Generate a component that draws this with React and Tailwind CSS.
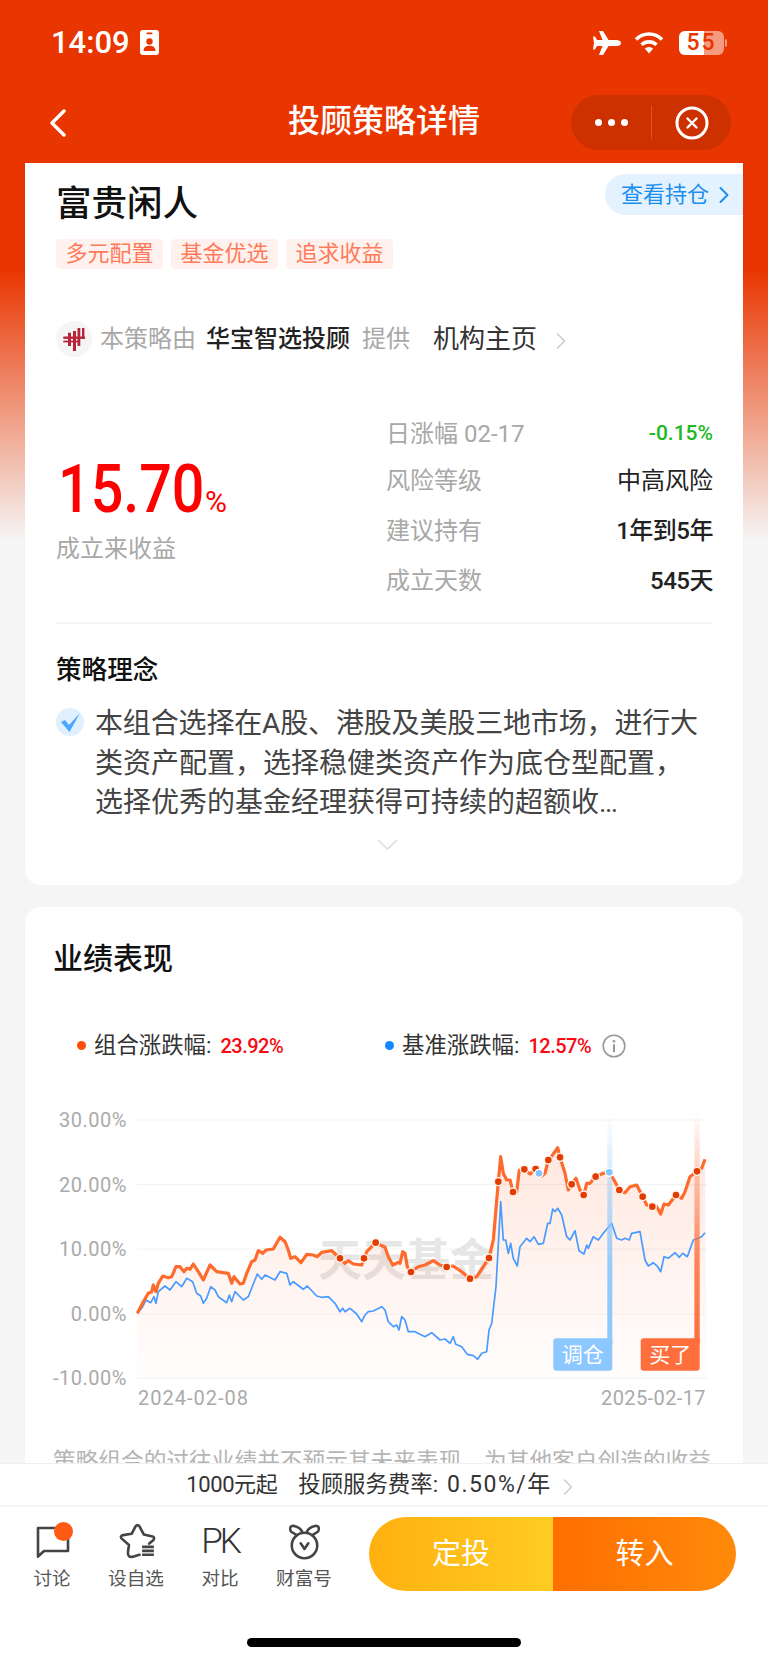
// 投顾策略详情 page
const scanA = (pts) => pts.map(([x, y]) => [20 + x / 3, 1010 + y / 3]);
const scanB = (pts) => pts.map(([x, y]) => [390 + x / 3, 1010 + y / 3]);
const toPath = (pts) => pts.map(([x, y], i) => `${i ? "L" : "M"}${x.toFixed(1)} ${y.toFixed(1)}`).join(" ");

const orangeLine = [
  ...scanA([[352,910],[370,875],[385,850],[395,845],[400,825],[408,845],[415,820],[428,798],[445,803],[455,800],[468,770],[480,770],[492,785],[500,775],[510,778],[520,762],[535,785],[550,810],[570,765],[590,785],[610,788],[625,790],[635,820],[642,800],[660,822],[670,820],[680,790],[695,755],[705,750],[715,722],[728,730],[738,720],[760,717],[780,682],[795,695],[805,720],[812,745],[825,740],[843,758],[860,733],[880,735],[892,740],[905,727],[935,722],[960,745],[975,760],[985,752],[1000,762],[1025,765],[1040,725],[1067,698],[1095,712],[1105,740]]),
  ...scanB([[8,765],[25,757],[30,760],[38,725],[45,730],[52,770],[63,785],[85,770],[105,765],[130,752],[150,765],[170,771],[190,768],[215,785],[240,806],[260,800],[280,770],[297,744],[310,690],[325,515],[332,440],[340,490],[350,510],[360,510],[369,545],[380,545],[388,480],[403,478],[420,492],[437,477],[455,498],[465,490],[475,450],[490,432],[503,413],[510,442],[525,490],[535,540],[545,523],[558,505],[570,540],[581,555],[590,520],[600,520],[617,500],[640,490],[658,487],[675,515],[688,540],[705,548],[720,530],[740,525],[758,560],[770,585],[787,590],[800,590],[812,612],[822,582],[835,585],[858,555],[875,565],[885,545],[900,500],[921,484],[935,475],[945,448]]),
];

const blueLine = [
  ...scanA([[352,910],[365,895],[378,870],[392,878],[402,860],[408,880],[415,845],[435,828],[450,840],[468,815],[485,830],[500,805],[518,815],[530,850],[542,858],[550,880],[560,865],[572,830],[585,840],[595,860],[620,878],[628,855],[635,875],[645,845],[670,870],[685,860],[700,822],[712,792],[725,808],[735,795],[765,810],[780,785],[800,790],[810,825],[820,815],[850,838],[862,828],[890,858],[905,862],[925,860],[945,880],[960,905],[968,895],[975,905],[990,895],[1010,912],[1025,935],[1035,915],[1045,905],[1060,903],[1085,890],[1095,900],[1105,935]]),
  ...scanB([[10,950],[20,945],[27,960],[35,920],[45,930],[55,965],[75,965],[105,980],[125,968],[150,990],[165,987],[180,1000],[190,980],[197,1003],[215,1010],[232,1033],[250,1037],[263,1048],[275,1030],[290,1025],[297,960],[305,940],[318,830],[332,575],[340,690],[347,690],[355,730],[362,700],[370,745],[382,768],[390,710],[410,685],[420,695],[432,680],[445,703],[460,700],[473,640],[480,640],[488,597],[495,605],[503,595],[515,615],[530,680],[540,690],[555,662],[567,722],[582,732],[590,705],[595,715],[610,680],[625,690],[640,670],[665,640],[680,685],[695,690],[705,685],[718,690],[725,670],[750,665],[765,750],[775,768],[790,758],[803,770],[812,785],[822,740],[835,745],[855,728],[868,742],[878,730],[892,740],[910,690],[925,685],[935,680],[945,668]]),
];

const orangeDots = [
  ...scanA([[960,745],[1032,745],[1067,698]]),
  ...scanB([[63,786],[170,771],[240,806],[297,744],[325,515],[369,546],[403,478],[437,477],[475,450],[510,442],[545,523],[581,555],[617,500],[688,540],[758,560],[787,590],[858,555],[921,484]]),
];
const blueDots = scanB([[447,490],[658,487]]);

const axis = [
  ["30.00%", 1120],
  ["20.00%", 1184.7],
  ["10.00%", 1249],
  ["0.00%", 1314],
  ["-10.00%", 1378.3],
];

const stats = [
  ["风险等级", "中高风险", "text-[24px] text-[#222]"],
  ["建议持有", "1年到5年", "text-[24px] font-medium tracking-[-0.5px] text-[#222]"],
  ["成立天数", "545天", "text-[24px] font-medium tracking-[-0.5px] text-[#222]"],
];

function Chevron({ className, stroke = "#ccc", width = 2 }) {
  return (
    <svg viewBox="0 0 10 16" className={className} fill="none">
      <path d="M1.5 1 L8.5 8 L1.5 15" stroke={stroke} strokeWidth={width} strokeLinecap="round" strokeLinejoin="round" />
    </svg>
  );
}

function StatusBar() {
  return (
    <div className="flex h-[95px] items-center justify-between pb-[10px] pl-[51px] pr-[41px] text-white">
      <div className="flex items-center gap-[10px]">
        <span className="text-[31px] font-medium leading-none">14:09</span>
        <svg viewBox="0 0 19 25" className="h-[25px] w-[19px]">
          <rect width="19" height="25" rx="3" fill="#fff" />
          <rect x="6.5" y="2.5" width="6" height="1.8" rx=".9" fill="#e93600" />
          <circle cx="9.5" cy="11.5" r="3.2" fill="#e93600" />
          <path d="M3.5 21 Q3.5 15.8 9.5 15.8 Q15.5 15.8 15.5 21 Z" fill="#e93600" />
        </svg>
      </div>
      <div className="flex items-center">
        <svg viewBox="0 0 28 26" className="h-[26px] w-[28px]" fill="#fff">
          <path d="M6 1 L10 1 L15.5 10 L24 10 Q28 10.5 28 13 Q28 15.5 24 16 L15.5 16 L10 25 L6 25 L9.5 16 L4 16 L2 19.5 L0 19.5 L1 13 L0 6.5 L2 6.5 L4 10 L9.5 10 Z" />
        </svg>
        <svg viewBox="0 0 30 23" className="ml-[13px] h-[23px] w-[30px]" fill="none" stroke="#fff" strokeWidth="3.6">
          <path d="M2 8.5 A18 18 0 0 1 28 8.5" />
          <path d="M7.5 13.8 A11 11 0 0 1 22.5 13.8" />
          <path d="M15 22.5 L10.8 17.6 A6 6 0 0 1 19.2 17.6 Z" fill="#fff" stroke="none" />
        </svg>
        <div className="relative ml-[15px] flex h-[24px] w-[45px] overflow-hidden rounded-[6px] bg-white/50">
          <div className="h-full w-[25px] bg-white" />
          <span className="absolute inset-0 flex items-center justify-center text-[23px] font-medium leading-none tracking-[2px] text-[#e93600]">55</span>
        </div>
        <div className="ml-[1px] h-[8px] w-[2px] rounded-r-full bg-white/50" />
      </div>
    </div>
  );
}

function NavBar() {
  return (
    <div className="mb-[13px] grid h-[55px] grid-cols-[1fr_auto_1fr] items-center">
      <div className="pl-[49px]">
        <svg viewBox="0 0 17 28" className="h-[28px] w-[17px]" fill="none">
          <path d="M15 2 L3 14 L15 26" stroke="#fff" strokeWidth="3.4" strokeLinecap="round" strokeLinejoin="round" />
        </svg>
      </div>
      <div className="pb-[3px] text-[32px] font-medium leading-none text-white">投顾策略详情</div>
      <div className="flex justify-end pr-[37px]">
        <div className="flex h-[55px] w-[160px] items-center rounded-full bg-[#cd3100]">
          <div className="flex w-[80px] items-center justify-center gap-[6px]">
            <span className="size-[7px] rounded-full bg-white" />
            <span className="size-[7px] rounded-full bg-white" />
            <span className="size-[7px] rounded-full bg-white" />
          </div>
          <div className="h-[33px] w-px bg-[#e2522a]" />
          <div className="flex flex-1 items-center justify-center">
            <svg viewBox="0 0 34 34" className="size-[34px]" fill="none" stroke="#fff">
              <circle cx="17" cy="17" r="15" strokeWidth="3" />
              <path d="M12.5 12.5 L21.5 21.5 M21.5 12.5 L12.5 21.5" strokeWidth="2.4" strokeLinecap="round" />
            </svg>
          </div>
        </div>
      </div>
    </div>
  );
}

function StrategyCard() {
  return (
    <div className="mx-[25px] rounded-b-2xl bg-white pb-[35px]">
      <div className="flex items-start justify-between pt-[11px]">
        <h1 className="ml-[31px] mt-[10px] text-[35.5px] font-medium leading-[41px] text-[#111]">富贵闲人</h1>
        <div className="flex h-[41px] w-[138px] items-center gap-[10px] rounded-l-full bg-[#e3f2fe] pl-[16px]">
          <span className="text-[22px] leading-none text-[#1b8fee]">查看持仓</span>
          <Chevron className="h-[20px] w-[10px]" stroke="#1b8fee" />
        </div>
      </div>

      <div className="ml-[31px] mt-[14px] flex gap-[8px]">
        {["多元配置", "基金优选", "追求收益"].map((tag) => (
          <span key={tag} className="flex h-[30px] w-[107px] items-center justify-center rounded-[4px] bg-[#fff1ed] text-[22px] leading-none text-[#ff7a5a]">
            {tag}
          </span>
        ))}
      </div>

      <div className="ml-[31px] mt-[51px] flex h-[37px] items-center">
        <svg viewBox="0 0 36 36" className="size-[36px]">
          <circle cx="18" cy="18" r="18" fill="#f5f5f5" />
          <g fill="#b8243a">
            <rect x="7.3" y="15.5" width="21.7" height="2.4" />
            <rect x="7.3" y="19.6" width="15" height="1.8" />
            <rect x="12" y="11.7" width="3" height="13.3" />
            <rect x="17" y="10" width="3" height="20" />
            <rect x="21.5" y="7" width="2.8" height="18" />
            <rect x="26" y="7" width="2.4" height="11" />
          </g>
        </svg>
        <span className="ml-[8px] text-[24px] leading-none text-[#a8a8a8]">本策略由</span>
        <span className="ml-[10px] text-[24px] font-medium leading-none text-[#222]">华宝智选投顾</span>
        <span className="ml-[12px] text-[24px] leading-none text-[#a8a8a8]">提供</span>
        <span className="ml-[23px] text-[26px] leading-none text-[#333]">机构主页</span>
        <Chevron className="ml-[19px] mt-[4px] h-[16px] w-[10px]" stroke="#ccc" width={1.6} />
      </div>

      <div className="ml-[31px] mr-[30px] flex">
        <div className="mt-[54px] w-[330px]">
          <div className="mt-[46px] flex items-baseline pl-[2px]">
            <span className="inline-block w-[147px] origin-left scale-x-[.87] text-[66px] font-medium leading-[66px] text-[#fe0000]">15.70</span>
            <span className="text-[30px] leading-none text-[#fe0000]">%</span>
          </div>
          <div className="mt-[11px] text-[24px] leading-[30px] text-[#a8a8a8]">成立来收益</div>
        </div>
        <div className="flex-1 pt-[54px]">
          <div className="flex h-[45px] items-center justify-between">
            <span className="text-[24px] leading-none text-[#a8a8a8]">日涨幅 02-17</span>
            <span className="text-[21px] font-medium leading-none text-[#1db91d]">-0.15%</span>
          </div>
          {stats.map(([label, value, valueClass]) => (
            <div key={label} className="flex h-[50px] items-center justify-between">
              <span className="text-[24px] leading-none text-[#a8a8a8]">{label}</span>
              <span className={`leading-none ${valueClass}`}>{value}</span>
            </div>
          ))}
        </div>
      </div>

      <div className="ml-[31px] mr-[30px] mt-[16px] h-[2px] bg-[#f5f5f5]" />

      <h2 className="ml-[31px] mt-[28px] text-[25.6px] font-medium leading-[36px] text-[#111]">策略理念</h2>
      <div className="ml-[31px] mt-[16px] flex">
        <svg viewBox="0 0 28 28" className="mt-[4px] size-[28px] shrink-0">
          <circle cx="14" cy="14" r="14" fill="#e0f0ff" />
          <path d="M5 14 L9 12 L13 17 L24 5 L13.5 24 Z" fill="#4aa8ff" />
        </svg>
        <p className="ml-[11px] text-[28px] leading-[39.5px] text-[#444]">
          <span className="block whitespace-nowrap tracking-[-0.15px]">本组合选择在A股、港股及美股三地市场，进行大</span>
          <span className="block whitespace-nowrap">类资产配置，选择稳健类资产作为底仓型配置，</span>
          <span className="block whitespace-nowrap">选择优秀的基金经理获得可持续的超额收<span className="tracking-[-1.5px]">...</span></span>
        </p>
      </div>
      <div className="mt-[16px] flex justify-center pl-[6px]">
        <svg viewBox="0 0 21 11" className="h-[11px] w-[21px]" fill="none">
          <path d="M1 1 L10.5 10 L20 1" stroke="#dcdcdc" strokeWidth="1.5" />
        </svg>
      </div>
    </div>
  );
}

function Chart() {
  return (
    <svg viewBox="25 1100 718 320" className="mt-[39px] block h-[320px] w-[718px]">
      <defs>
        <linearGradient id="area" x1="0" y1="0" x2="0" y2="1">
          <stop offset="0" stopColor="#ff5a1e" stopOpacity=".14" />
          <stop offset="1" stopColor="#ff5a1e" stopOpacity=".01" />
        </linearGradient>
        <linearGradient id="blueBar" x1="0" y1="0" x2="0" y2="1">
          <stop offset="0" stopColor="#8cc8ff" stopOpacity="0" />
          <stop offset=".65" stopColor="#8cc8ff" stopOpacity=".9" />
          <stop offset="1" stopColor="#8cc8ff" />
        </linearGradient>
        <linearGradient id="redBar" x1="0" y1="0" x2="0" y2="1">
          <stop offset="0" stopColor="#ff6f3d" stopOpacity="0" />
          <stop offset=".65" stopColor="#ff6f3d" stopOpacity=".85" />
          <stop offset="1" stopColor="#ff6f3d" />
        </linearGradient>
      </defs>

      {axis.map(([label, y]) => (
        <g key={label}>
          <line x1="137" x2="707" y1={y} y2={y} stroke="#f3f3f3" strokeWidth="1.2" />
          <text x="127" y={y + 7} textAnchor="end" fontSize="20" letterSpacing=".5" fill="#aaa">{label}</text>
        </g>
      ))}

      <text x="318" y="1276" fontSize="44" fontWeight="700" fill="#e6e6e6">天天基金</text>

      <path d={`${toPath(orangeLine)} L706.5 1378 L137 1378 Z`} fill="url(#area)" />
      <path d={toPath(blueLine)} fill="none" stroke="#4a9bff" strokeWidth="1.7" strokeLinejoin="round" />
      <path d={toPath(orangeLine)} fill="none" stroke="#ff6a2d" strokeWidth="3.2" strokeLinejoin="round" />

      <rect x="607.3" y="1113" width="5" height="228" fill="url(#blueBar)" />
      <rect x="694.4" y="1113" width="5.3" height="228" fill="url(#redBar)" />

      {orangeDots.map(([x, y]) => (
        <circle key={`${x}-${y}`} cx={x} cy={y} r="4" fill="#e33c00" stroke="#fff1ec" strokeWidth="1.4" />
      ))}
      {blueDots.map(([x, y]) => (
        <circle key={`${x}-${y}`} cx={x} cy={y} r="4" fill="#7fc4ff" stroke="#fff" strokeWidth="1.4" />
      ))}

      <rect x="553.3" y="1338.3" width="59" height="32.4" rx="3" fill="#8cc8ff" />
      <rect x="606" y="1338.3" width="6.3" height="6" fill="#8cc8ff" />
      <text x="582.8" y="1362" textAnchor="middle" fontSize="21" fill="#fff">调仓</text>
      <rect x="640.7" y="1338.3" width="59" height="32.4" rx="3" fill="#ff6f3d" />
      <rect x="693.4" y="1338.3" width="6.3" height="6" fill="#ff6f3d" />
      <text x="670.2" y="1362" textAnchor="middle" fontSize="21" fill="#fff">买了</text>

      <text x="138" y="1405" fontSize="20" letterSpacing="1" fill="#aaa">2024-02-08</text>
      <text x="706" y="1405" textAnchor="end" fontSize="20" letterSpacing=".4" fill="#aaa">2025-02-17</text>
    </svg>
  );
}

function PerformanceCard() {
  return (
    <div className="mx-[25px] mt-[22px] rounded-t-2xl bg-white pt-[32px]">
      <h2 className="ml-[28px] text-[30px] font-medium leading-[40px] text-[#111]">业绩表现</h2>

      <div className="ml-[52px] mt-[52px] flex h-[30px] items-center">
        <div className="flex w-[308px] items-center">
          <span className="size-[9px] rounded-full bg-[#ff4d0d]" />
          <span className="ml-[8px] text-[22.4px] leading-none text-[#333]">组合涨跌幅:</span>
          <span className="ml-[9px] text-[20px] font-medium leading-none tracking-[-0.5px] text-[#f70a14]">23.92%</span>
        </div>
        <span className="size-[9px] rounded-full bg-[#1188ff]" />
        <span className="ml-[8px] text-[22.4px] leading-none text-[#333]">基准涨跌幅:</span>
        <span className="ml-[9px] text-[20px] font-medium leading-none tracking-[-0.5px] text-[#f70a14]">12.57%</span>
        <svg viewBox="0 0 24 24" className="ml-[11px] size-[24px]" fill="none">
          <circle cx="12" cy="12" r="10.8" stroke="#999" strokeWidth="1.6" />
          <circle cx="12" cy="7.2" r="1.3" fill="#999" />
          <rect x="11" y="10.2" width="2" height="8" fill="#999" />
        </svg>
      </div>

      <Chart />

      <p className="ml-[28px] mt-[26px] whitespace-nowrap text-[22.7px] leading-[32px] text-[#b5b5b5]">
        策略组合的过往业绩并不预示其未来表现，为其他客户创造的收益
      </p>
    </div>
  );
}

function BottomBar() {
  return (
    <div className="h-[200px] shrink-0 border-t border-[#f0f0f0] bg-white">
      <div className="flex h-[41px] items-center justify-center pr-[9px] text-[23px] leading-none text-[#333]">
        <span className="text-[22px] tracking-[-0.4px]">1000元起</span>
        <span className="ml-[21px] text-[22.4px]">投顾服务费率:</span>
        <span className="ml-[9px] tracking-[1.5px]">0.50%/年</span>
        <Chevron className="ml-[11px] mt-[4px] h-[18px] w-[10px]" stroke="#ccc" width={1.5} />
      </div>
      <div className="h-[2px] bg-[#f5f5f5]" />
      <div className="flex pl-[10px]">
        <div className="w-[84px] pt-[16px] text-center">
          <div className="relative flex h-[36px] justify-center">
            <svg viewBox="0 0 36 36" className="size-[36px]" fill="none">
              <path d="M4 5 H34 V28 H10 L4 33.5 Z" stroke="#444" strokeWidth="2.6" strokeLinejoin="round" />
            </svg>
            <span className="absolute left-[44px] top-[-1px] size-[19px] rounded-full bg-[#ff5a14]" />
          </div>
          <div className="mt-[8px] text-[18.6px] leading-[24px] text-[#555]">讨论</div>
        </div>
        <div className="w-[84px] pt-[16px] text-center">
          <div className="flex h-[36px] justify-center pl-[3px]">
            <svg viewBox="280 25 115 110" className="h-[36px] w-[38px]" fill="none" stroke="#444" strokeWidth="8" strokeLinecap="round" strokeLinejoin="round">
              <path d="M342 122 L322 128 Q305 132 307 112 L310 92 L287 72 Q282 64 292 62 L318 58 L330 35 Q336 28 342 35 L355 60 L382 66 Q390 70 384 78 L372 88" />
              <path d="M350 98 H386 M350 110 H386 M350 122 H386" strokeLinecap="butt" />
            </svg>
          </div>
          <div className="mt-[8px] text-[18.6px] leading-[24px] text-[#555]">设自选</div>
        </div>
        <div className="w-[84px] pt-[16px] text-center">
          <div className="flex h-[36px] items-center justify-center text-[35px] font-light leading-none tracking-[-3px] text-[#333]">PK</div>
          <div className="mt-[8px] text-[18.6px] leading-[24px] text-[#555]">对比</div>
        </div>
        <div className="w-[84px] pt-[16px] text-center">
          <div className="flex h-[36px] justify-center">
            <svg viewBox="290 22 110 118" className="h-[38px] w-[35px]" fill="none" stroke="#444" strokeWidth="8" strokeLinecap="round" strokeLinejoin="round">
              <circle cx="345" cy="92" r="40" />
              <path d="M318 58 L302 48 Q295 30 310 30 Q335 35 338 52" />
              <path d="M372 58 L388 48 Q395 30 380 30 Q355 35 352 52" />
              <path d="M333 85 L345 103 L357 85" />
            </svg>
          </div>
          <div className="mt-[8px] text-[18.6px] leading-[24px] text-[#555]">财富号</div>
        </div>
        <div className="ml-[23px] mt-[10px] flex h-[74px] w-[367px] overflow-hidden rounded-full text-[29px] leading-none text-white">
          <div className="flex w-[184px] items-center justify-center bg-gradient-to-r from-[#ffb00f] to-[#ffcc22]">定投</div>
          <div className="flex flex-1 items-center justify-center bg-gradient-to-r from-[#ff6e00] to-[#ff8a0a]">转入</div>
        </div>
      </div>
      <div className="mx-auto mt-[47px] h-[9px] w-[274px] rounded-full bg-black" />
    </div>
  );
}

export default function App() {
  return (
    <div className="flex h-[1663px] w-[768px] flex-col overflow-hidden bg-[linear-gradient(#e93600_270px,#f5f5f5_540px)] font-[Roboto,'Noto_Sans_CJK_SC',sans-serif]">
      <StatusBar />
      <NavBar />
      <div className="min-h-0 flex-1 overflow-hidden">
        <StrategyCard />
        <PerformanceCard />
      </div>
      <BottomBar />
    </div>
  );
}
